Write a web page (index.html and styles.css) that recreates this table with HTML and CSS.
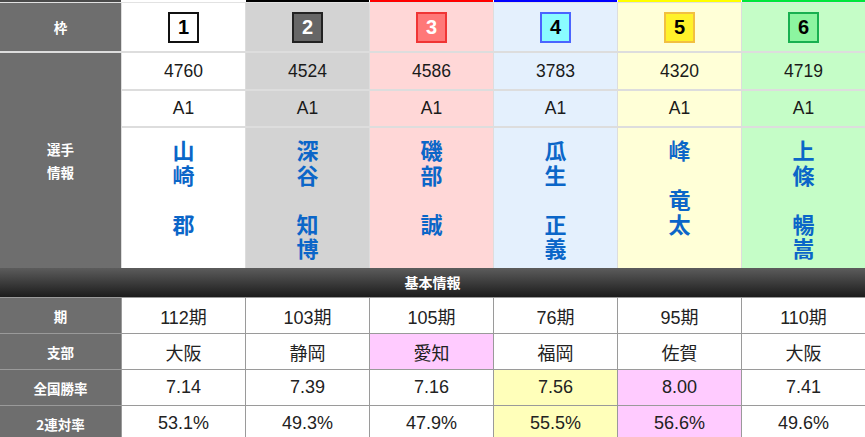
FILE: index.html
```html
<!DOCTYPE html>
<html lang="ja">
<head>
<meta charset="utf-8">
<link rel="stylesheet" href="styles.css">
</head>
<body>
<div class="strip">
  <div class="s-label"></div>
  <div class="s s1"></div>
  <div class="s s2"></div>
  <div class="s s3"></div>
  <div class="s s4"></div>
  <div class="s s5"></div>
  <div class="s s6"></div>
</div>
<div class="top">
  <div class="label">枠</div>
  <div class="cell c1"><span class="waku w1">1</span></div>
  <div class="cell c2"><span class="waku w2">2</span></div>
  <div class="cell c3"><span class="waku w3">3</span></div>
  <div class="cell c4"><span class="waku w4">4</span></div>
  <div class="cell c5"><span class="waku w5">5</span></div>
  <div class="cell c6"><span class="waku w6">6</span></div>

  <div class="label span3">選手<br>情報</div>
  <div class="cell c1 val">4760</div>
  <div class="cell c2 val">4524</div>
  <div class="cell c3 val">4586</div>
  <div class="cell c4 val">3783</div>
  <div class="cell c5 val">4320</div>
  <div class="cell c6 val">4719</div>

  <div class="cell c1 val">A1</div>
  <div class="cell c2 val">A1</div>
  <div class="cell c3 val">A1</div>
  <div class="cell c4 val">A1</div>
  <div class="cell c5 val">A1</div>
  <div class="cell c6 val">A1</div>

  <div class="name c1">山<br>崎<br><br>郡</div>
  <div class="name c2">深<br>谷<br><br>知<br>博</div>
  <div class="name c3">磯<br>部<br><br>誠</div>
  <div class="name c4">瓜<br>生<br><br>正<br>義</div>
  <div class="name c5">峰<br><br>竜<br>太</div>
  <div class="name c6">上<br>條<br><br>暢<br>嵩</div>
</div>
<div class="bar">基本情報</div>
<div class="bottom">
  <div class="blabel">期</div>
  <div class="bval">112期</div>
  <div class="bval">103期</div>
  <div class="bval">105期</div>
  <div class="bval">76期</div>
  <div class="bval">95期</div>
  <div class="bval">110期</div>

  <div class="blabel">支部</div>
  <div class="bval">大阪</div>
  <div class="bval">静岡</div>
  <div class="bval hl-pink">愛知</div>
  <div class="bval">福岡</div>
  <div class="bval">佐賀</div>
  <div class="bval">大阪</div>

  <div class="blabel">全国勝率</div>
  <div class="bval">7.14</div>
  <div class="bval">7.39</div>
  <div class="bval">7.16</div>
  <div class="bval hl-yellow">7.56</div>
  <div class="bval hl-pink">8.00</div>
  <div class="bval">7.41</div>

  <div class="blabel">2連対率</div>
  <div class="bval">53.1%</div>
  <div class="bval">49.3%</div>
  <div class="bval">47.9%</div>
  <div class="bval hl-yellow">55.5%</div>
  <div class="bval hl-pink">56.6%</div>
  <div class="bval">49.6%</div>
</div>
</body>
</html>
```
FILE: styles.css
```css
html, body {
  margin: 0;
  padding: 0;
  background: #fff;
  font-family: "Liberation Sans", "Noto Sans CJK JP", sans-serif;
  color: #222;
  overflow: hidden;
}

.strip {
  display: flex;
  gap: 1px;
  height: 2px;
  background: #fff;
  border-bottom: 1px solid #e2e2e2;
}
.s-label { width: 121px; background: #4a4a4a; }
.s { width: 123px; }
.s1 { background: #fff; }
.s2 { background: #000; }
.s3 { background: #ff0000; }
.s4 { background: #0000ff; }
.s5 { background: #ffff00; }
.s6 { background: #00e63c; }

.top {
  display: grid;
  grid-template-columns: 121px repeat(6, 123px);
  grid-template-rows: 48px 36px 35px 140px;
  column-gap: 1px;
  row-gap: 2px;
  background: #dddddd;
}

.label {
  background: #6e6e6e;
  color: #fff;
  font-family: "Noto Sans CJK JP", sans-serif;
  font-weight: 700;
  font-size: 13.5px;
  line-height: 23px;
  display: flex;
  align-items: center;
  justify-content: center;
  text-align: center;
}
.span3 { grid-row: span 3; }

.cell {
  display: flex;
  align-items: center;
  justify-content: center;
}
.val { font-size: 17.5px; color: #1a1a1a; }

.c1 { background: #ffffff; }
.c2 { background: #d3d3d3; }
.c3 { background: #ffd7d7; }
.c4 { background: #e4f0fd; }
.c5 { background: #ffffd7; }
.c6 { background: #c5fdc7; }

.waku {
  box-sizing: border-box;
  width: 31px;
  height: 31px;
  border: 2px solid #000;
  display: flex;
  align-items: center;
  justify-content: center;
  font-weight: 700;
  font-size: 20px;
  line-height: 1;
}
.w1 { background: #fff; color: #000; border-color: #111; }
.w2 { background: #666; color: #fff; border-color: #222; }
.w3 { background: #ff7878; color: #fff; border-color: #f03535; }
.w4 { background: #8afcff; color: #000; border-color: #4a64ff; }
.w5 { background: #fff22a; color: #000; border-color: #f2c040; }
.w6 { background: #8cf5a0; color: #000; border-color: #18b050; }

.name {
  box-sizing: border-box;
  padding-top: 9px;
  text-align: center;
  font-family: "Noto Sans CJK JP", sans-serif;
  font-weight: 700;
  font-size: 22px;
  line-height: 24.5px;
  color: #0b66c8;
}

.bar {
  height: 29px;
  line-height: 29px;
  text-align: center;
  color: #fff;
  font-family: "Noto Sans CJK JP", sans-serif;
  font-weight: 700;
  font-size: 14px;
  background: linear-gradient(#5c5c5c, #1c1c1c);
}

.bottom {
  display: grid;
  grid-template-columns: 121px repeat(6, 123px);
  grid-auto-rows: 35px;
  gap: 1px;
  padding-top: 1px;
  background: #9a9a9a;
}
.blabel {
  background: #6e6e6e;
  color: #fff;
  font-family: "Noto Sans CJK JP", sans-serif;
  font-weight: 700;
  font-size: 13.5px;
  display: flex;
  align-items: center;
  justify-content: center;
}
.bval {
  background: #fff;
  font-size: 18px;
  color: #222;
  display: flex;
  align-items: center;
  justify-content: center;
}
.hl-pink { background: #ffcbff; }
.hl-yellow { background: #ffffba; }
```
